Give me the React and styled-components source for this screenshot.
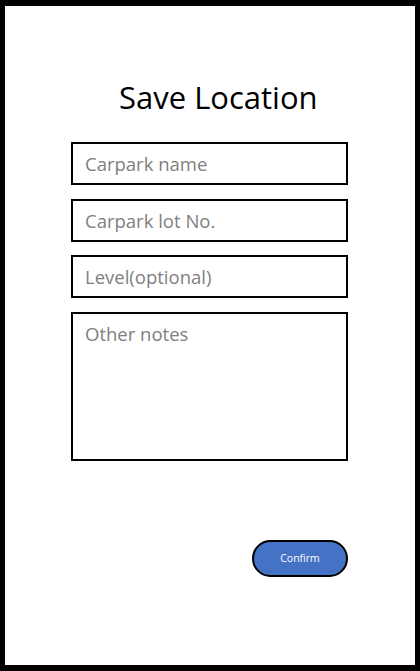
import React from 'react';
import styled, { createGlobalStyle } from 'styled-components';

const GlobalStyle = createGlobalStyle`
  html, body {
    margin: 0;
    padding: 0;
    background: #fff;
  }
  * {
    box-sizing: border-box;
  }
`;

const fields = [
    { id: 'name', placeholder: 'Carpark name' },
    { id: 'lot', placeholder: 'Carpark lot No.' },
    { id: 'level', placeholder: 'Level(optional)' },
];

const App = () => {
    return (
        <>
            <GlobalStyle />
            <Frame>
                <Title>Save Location</Title>
                <Form>
                    {fields.map((f) => (
                        <Field key={f.id} type="text" placeholder={f.placeholder} />
                    ))}
                    <Notes placeholder="Other notes" />
                </Form>
                <Actions>
                    <ConfirmButton>Confirm</ConfirmButton>
                </Actions>
            </Frame>
        </>
    );
};

const Frame = styled.div`
  width: 420px;
  height: 671px;
  border: 5px solid #000;
  border-top-width: 6px;
  border-bottom-width: 6px;
  background: #fff;
  display: flex;
  flex-direction: column;
  padding: 0 66px;
  font-family: 'Open Sans', 'Noto Sans', sans-serif;
`;

const Title = styled.h1`
  margin: 73px 0 0 0;
  padding-left: 48px;
  font-size: 31px;
  font-weight: 400;
  line-height: 36px;
  color: #000;
  white-space: nowrap;
`;

const Form = styled.div`
  margin-top: 27px;
  width: 277px;
  display: flex;
  flex-direction: column;
  gap: 13.5px;
`;

const Field = styled.input`
  width: 100%;
  height: 43px;
  border: 2px solid #000;
  border-radius: 0;
  padding: 0 12px;
  font-family: inherit;
  font-size: 18.5px;
  color: #000;
  outline: none;

  &::placeholder {
    color: #808080;
  }
`;

const Notes = styled.textarea`
  width: 100%;
  height: 149px;
  border: 2px solid #000;
  border-radius: 0;
  padding: 8px 12px;
  font-family: inherit;
  font-size: 18.5px;
  line-height: 24px;
  resize: none;
  outline: none;

  &::placeholder {
    color: #808080;
  }
`;

const Actions = styled.div`
  width: 277px;
  margin-top: 79px;
  display: flex;
  justify-content: flex-end;
`;

const ConfirmButton = styled.button`
  width: 96px;
  height: 37px;
  border: 2px solid #000;
  border-radius: 19px;
  background: #4472c4;
  color: #fff;
  font-family: inherit;
  font-size: 10.5px;
  cursor: pointer;
`;

export default App;
